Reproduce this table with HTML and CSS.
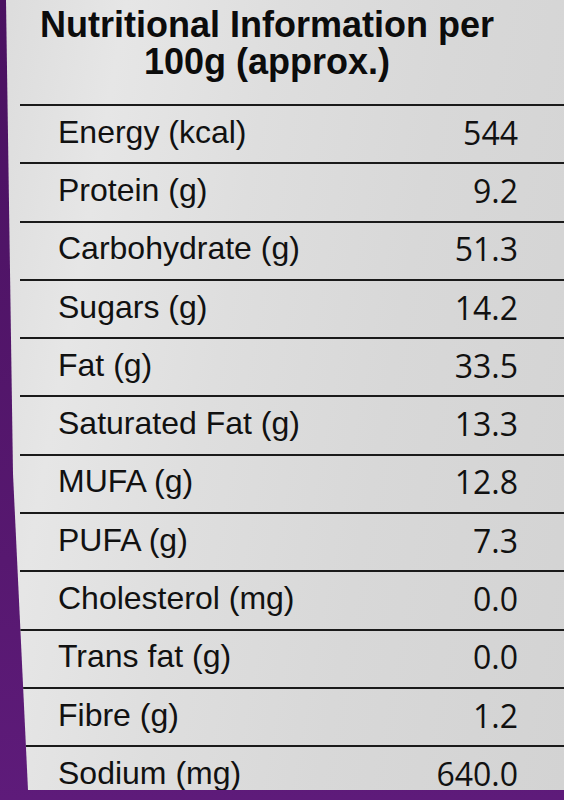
FILE: index.html
```html
<!DOCTYPE html>
<html lang="en">
<head>
  <meta charset="UTF-8" />
  <meta name="viewport" content="width=device-width, initial-scale=1" />
  <title>Nutritional Information</title>
  <link rel="stylesheet" href="styles.css">
</head>
<body>

  <div class="pack">
    <section class="label">
      <h1>Nutritional Information per<br>100g (approx.)</h1>

      <div class="facts">
        <div class="row"><span class="name">Energy (kcal)</span><span class="value">544</span></div>
        <div class="row"><span class="name">Protein (g)</span><span class="value">9.2</span></div>
        <div class="row"><span class="name">Carbohydrate (g)</span><span class="value">51.3</span></div>
        <div class="row"><span class="name">Sugars (g)</span><span class="value">14.2</span></div>
        <div class="row"><span class="name">Fat (g)</span><span class="value">33.5</span></div>
        <div class="row"><span class="name">Saturated Fat (g)</span><span class="value">13.3</span></div>
        <div class="row"><span class="name">MUFA (g)</span><span class="value">12.8</span></div>
        <div class="row"><span class="name">PUFA (g)</span><span class="value">7.3</span></div>
        <div class="row"><span class="name">Cholesterol (mg)</span><span class="value">0.0</span></div>
        <div class="row"><span class="name">Trans fat (g)</span><span class="value">0.0</span></div>
        <div class="row"><span class="name">Fibre (g)</span><span class="value">1.2</span></div>
        <div class="row"><span class="name">Sodium (mg)</span><span class="value">640.0</span></div>
      </div>
    </section>
  </div>

</body>
</html>
```

FILE: styles.css
```css
/* Упаковка: фиолетовый пакет с серебристой этикеткой */
body {
  margin: 0;
  background: #4c1262;
  font-family: "Liberation Sans", Arial, sans-serif;
  color: #111;
  overflow: hidden;
}

.pack {
  height: 800px;
  background: linear-gradient(180deg, #4a1160 0%, #571870 70%, #5e1b7a 100%);
}

.label {
  height: 790px;
  background: linear-gradient(100deg, #dcdcdc 0%, #e6e6e6 18%, #dedede 40%, #d8d8d8 65%, #d3d3d3 100%);
  clip-path: polygon(6px 0, 100% 0, 100% 100%, 28px 100%, 13px 60%);
}

h1 {
  margin: 0;
  padding: 6px 30px 0 0;
  height: 104px;
  box-sizing: border-box;
  text-align: center;
  font-size: 36px;
  line-height: 37px;
  font-weight: 700;
  color: #0c0c0c;
}

.facts {
  margin-left: 20px;
}

.row {
  height: 58.3px;
  box-sizing: border-box;
  border-top: 2px solid #1a1a1a;
  display: flex;
  justify-content: space-between;
  align-items: center;
  padding: 0 46px 4px 38px;
}

.name {
  font-size: 32px;
}

.value {
  font-family: "Open Sans", sans-serif;
  font-size: 32px;
}
```
